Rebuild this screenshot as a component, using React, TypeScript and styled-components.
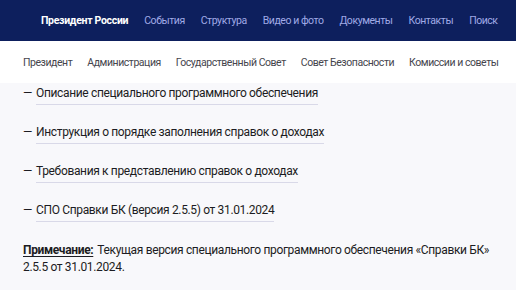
import React from "react";
import styled, { createGlobalStyle } from "styled-components";

const GlobalStyle = createGlobalStyle`
  html, body {
    margin: 0;
    padding: 0;
    background: #f8f8fb;
  }
  body {
    font-family: Roboto, "Liberation Sans", sans-serif;
    color: #1c1c22;
    overflow: hidden;
  }
`;

const Page = styled.div`
  width: 516px;
  height: 290px;
  display: flex;
  flex-direction: column;
  background: #f8f8fb;
  overflow: hidden;
`;

const TopBar = styled.header`
  height: 41px;
  background: #0d1f5d;
  display: flex;
  align-items: center;
  padding-left: 41px;
  gap: 16px;
  font-size: 10.5px;
`;

const TopLink = styled.a<{ $brand?: boolean }>`
  color: ${p => (p.$brand ? "#ffffff" : "#a0aae6")};
  font-weight: ${p => (p.$brand ? 700 : 400)};
  letter-spacing: ${p => (p.$brand ? "-0.3px" : "-0.45px")};
  text-decoration: none;
  white-space: nowrap;
`;

const SubNav = styled.nav`
  height: 42px;
  background: #ffffff;
  display: flex;
  align-items: center;
  padding-left: 23px;
  gap: 15px;
  font-size: 10.5px;
  letter-spacing: -0.45px;
`;

const SubLink = styled.a`
  color: #45454d;
  text-decoration: none;
  white-space: nowrap;
`;

const Content = styled.main`
  padding: 1px 23px 0;
  display: flex;
  flex-direction: column;
`;

const DocList = styled.ul`
  list-style: none;
  margin: 0;
  padding: 0;
  display: flex;
  flex-direction: column;
  gap: 18px;
`;

const DocItem = styled.li`
  font-size: 12px;
  line-height: 18px;
  letter-spacing: -0.35px;
  display: flex;
  align-items: baseline;
  gap: 4px;
`;

const Dash = styled.span`
  color: #1c1c22;
`;

const DocLink = styled.a`
  color: #1c1c22;
  text-decoration: none;
  padding-bottom: 2px;
  border-bottom: 1px solid #d9d9e8;
  white-space: nowrap;
`;

const Note = styled.p`
  margin: 20px 0 0;
  font-size: 12px;
  line-height: 17px;
  letter-spacing: -0.35px;
`;

const NoteLabel = styled.span`
  font-weight: 700;
  text-decoration: underline;
  text-underline-offset: 2px;
  margin-right: 4px;
`;

const topLinks = ["События", "Структура", "Видео и фото", "Документы", "Контакты", "Поиск"];
const subLinks = ["Президент", "Администрация", "Государственный Совет", "Совет Безопасности", "Комиссии и советы"];
const docs = [
  "Описание специального программного обеспечения",
  "Инструкция о порядке заполнения справок о доходах",
  "Требования к представлению справок о доходах",
  "СПО Справки БК (версия 2.5.5) от 31.01.2024",
];

export default function App() {
  return (
    <Page>
      <GlobalStyle />
      <TopBar>
        <TopLink $brand>Президент России</TopLink>
        {topLinks.map(l => (
          <TopLink key={l}>{l}</TopLink>
        ))}
      </TopBar>
      <SubNav>
        {subLinks.map(l => (
          <SubLink key={l}>{l}</SubLink>
        ))}
      </SubNav>
      <Content>
        <DocList>
          {docs.map(d => (
            <DocItem key={d}>
              <Dash>—</Dash>
              <DocLink>{d}</DocLink>
            </DocItem>
          ))}
        </DocList>
        <Note>
          <NoteLabel>Примечание:</NoteLabel>Текущая версия специального программного обеспечения «Справки БК» 2.5.5 от 31.01.2024.
        </Note>
      </Content>
    </Page>
  );
}
